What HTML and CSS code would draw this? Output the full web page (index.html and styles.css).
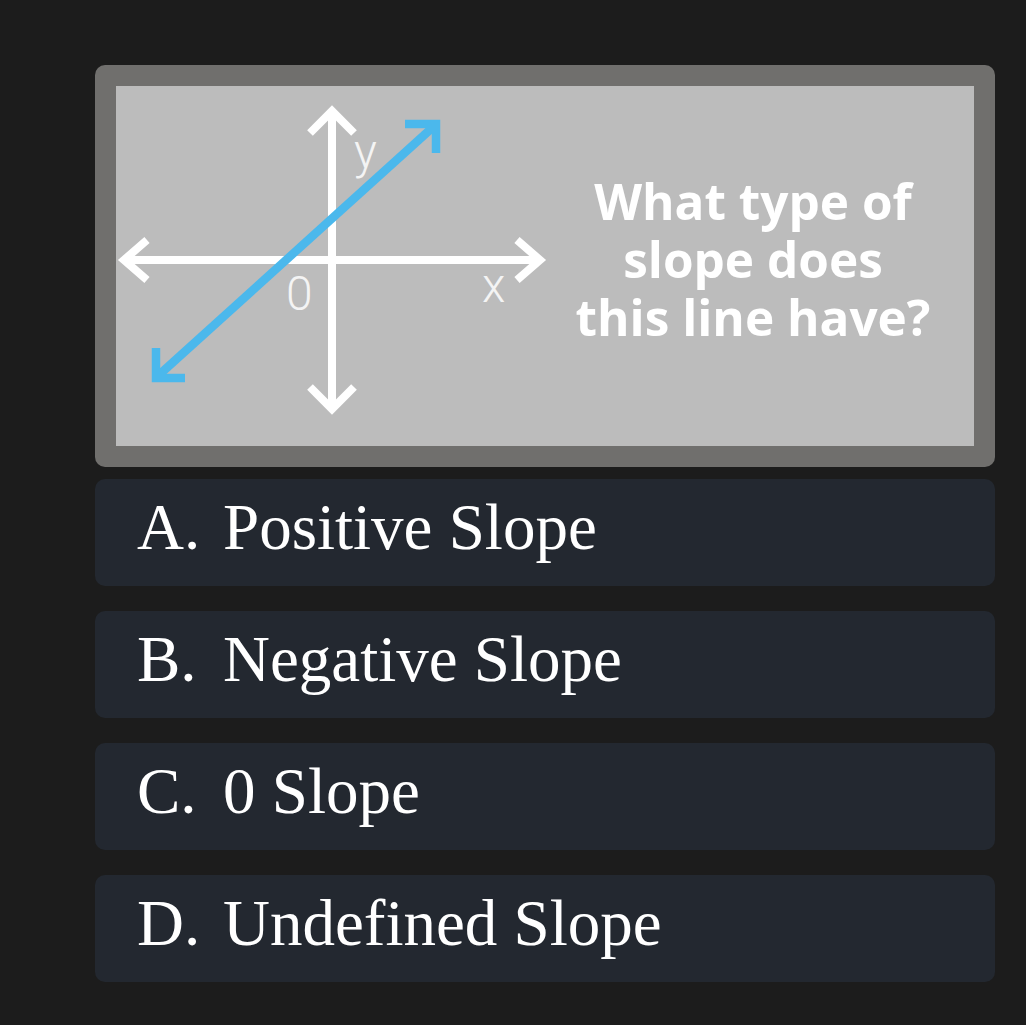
FILE: index.html
```html
<!DOCTYPE html>
<html lang="en">
<head>
<meta charset="utf-8">
<title>Slope Quiz</title>
<link rel="stylesheet" href="styles.css">
</head>
<body>
<main class="quiz">
  <section class="card">
    <div class="panel">
      <svg class="graph" width="430" height="360" viewBox="0 0 430 360" xmlns="http://www.w3.org/2000/svg">
        <g fill="none" stroke="#ffffff" stroke-width="8" stroke-linecap="butt" stroke-linejoin="miter">
          <line x1="8" y1="174" x2="424" y2="174"/>
          <polyline points="31,154 8,174 31,194"/>
          <polyline points="401,154 424,174 401,194"/>
          <line x1="216" y1="25" x2="216" y2="323"/>
          <polyline points="194,47 216,25 238,47"/>
          <polyline points="194,301 216,323 238,301"/>
        </g>
        <g fill="none" stroke="#4bb8ec" stroke-width="8.5" stroke-linecap="butt" stroke-linejoin="miter">
          <line x1="44" y1="288" x2="316" y2="42"/>
          <polyline points="289,38 320,38 320,67"/>
          <polyline points="40,262 40,292 69,292"/>
        </g>
        <g class="labels" fill="#f4f4f4">
          <text x="238" y="82">y</text>
          <text x="170" y="224">0</text>
          <text x="366" y="216">x</text>
        </g>
      </svg>
      <h1 class="question">What type of<br>slope does<br>this line have?</h1>
    </div>
  </section>
  <ul class="options">
    <li class="option"><span class="letter">A.</span><span class="answer">Positive Slope</span></li>
    <li class="option"><span class="letter">B.</span><span class="answer">Negative Slope</span></li>
    <li class="option"><span class="letter">C.</span><span class="answer">0 Slope</span></li>
    <li class="option"><span class="letter">D.</span><span class="answer">Undefined Slope</span></li>
  </ul>
</main>
</body>
</html>
```

FILE: styles.css
```css
html, body {
  margin: 0;
  padding: 0;
}

body {
  background: #1c1c1c;
  width: 1026px;
  height: 1025px;
  overflow: hidden;
}

.quiz {
  padding: 65px 0 0 95px;
  width: 900px;
}

.card {
  background: #706f6d;
  border-radius: 10px;
  padding: 21px;
  height: 402px;
  box-sizing: border-box;
}

.panel {
  background: #bcbcbc;
  height: 360px;
  display: flex;
  align-items: stretch;
}

.graph {
  display: block;
  flex: none;
  overflow: visible;
}

.labels text {
  font-family: Roboto, "Liberation Sans", sans-serif;
  font-weight: 300;
  font-size: 48px;
}

.question {
  flex: 1;
  margin: 0;
  padding: 0 14px 14px 0;
  align-self: center;
  text-align: center;
  color: #ffffff;
  font-family: "Open Sans", "Liberation Sans", sans-serif;
  font-weight: 700;
  font-size: 49.5px;
  line-height: 58px;
}

.options {
  list-style: none;
  margin: 12px 0 0 0;
  padding: 0;
  display: flex;
  flex-direction: column;
  gap: 25px;
}

.option {
  background: #232830;
  border-radius: 10px;
  height: 107px;
  box-sizing: border-box;
  padding: 16px 0 0 42px;
  display: flex;
  color: #ffffff;
  font-family: "Liberation Serif", "Times New Roman", serif;
  font-size: 65px;
  line-height: 64px;
}

.letter {
  width: 86px;
  flex: none;
}
```
